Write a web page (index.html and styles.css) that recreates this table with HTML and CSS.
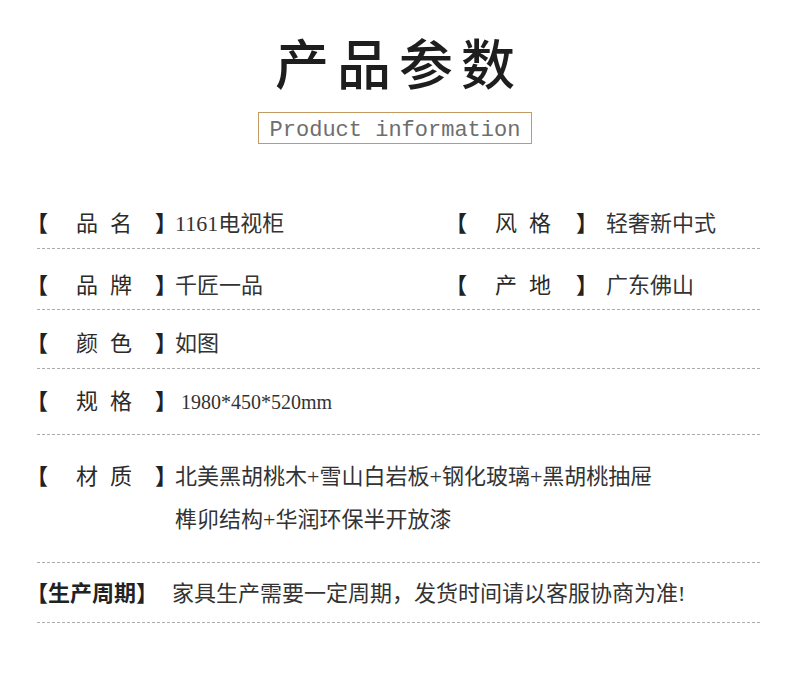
FILE: index.html
```html
<!DOCTYPE html>
<html lang="zh-CN">
<head>
<meta charset="utf-8">
<title>产品参数</title>
<link rel="stylesheet" href="styles.css">
</head>
<body>
<div class="page">
  <header class="head">
    <h1 class="title">产品参数</h1>
    <div class="sub">Product information</div>
  </header>
  <section class="table">
    <div class="row r1">
      <div class="cell">
        <span class="lb">【</span><span class="name">品名</span><span class="rb">】</span><span class="val"><span class="lat">1161</span>电视柜</span>
      </div>
      <div class="cell right">
        <span class="lb">【</span><span class="name">风格</span><span class="rb">】</span><span class="val">轻奢新中式</span>
      </div>
    </div>
    <div class="row r2">
      <div class="cell">
        <span class="lb">【</span><span class="name">品牌</span><span class="rb">】</span><span class="val">千匠一品</span>
      </div>
      <div class="cell right">
        <span class="lb">【</span><span class="name">产地</span><span class="rb">】</span><span class="val">广东佛山</span>
      </div>
    </div>
    <div class="row r3">
      <div class="cell wide">
        <span class="lb">【</span><span class="name">颜色</span><span class="rb">】</span><span class="val">如图</span>
      </div>
    </div>
    <div class="row r4">
      <div class="cell wide">
        <span class="lb">【</span><span class="name">规格</span><span class="rb">】</span><span class="val gap"><span class="lat small">1980*450*520mm</span></span>
      </div>
    </div>
    <div class="row r5">
      <div class="cell wide">
        <span class="lb">【</span><span class="name">材质</span><span class="rb">】</span><span class="val multi">北美黑胡桃木<span class="lat">+</span>雪山白岩板<span class="lat">+</span>钢化玻璃<span class="lat">+</span>黑胡桃抽屉<br>榫卯结构<span class="lat">+</span>华润环保半开放漆</span>
      </div>
    </div>
    <div class="row r6">
      <div class="cell wide">
        <span class="bold">【生产周期】</span><span class="val note">家具生产需要一定周期，发货时间请以客服协商为准<span class="lat">!</span></span>
      </div>
    </div>
  </section>
</div>
</body>
</html>
```

FILE: styles.css
```css
* { box-sizing: border-box; }
html, body { margin: 0; padding: 0; background: #ffffff; }
body {
  font-family: "Noto Sans CJK SC", "Liberation Serif", sans-serif;
  color: #333;
}
.page { width: 790px; }
.head {
  display: flex;
  flex-direction: column;
  align-items: center;
  padding-top: 31px;
}
.title {
  margin: 0;
  font-size: 54px;
  line-height: 62px;
  font-weight: 500;
  letter-spacing: 8px;
  padding-left: 8px;
  color: #1e1e1e;
}
.sub {
  margin-top: 19px;
  width: 274px;
  height: 32px;
  border: 1px solid #c39b62;
  font-family: "Liberation Mono", monospace;
  font-size: 22px;
  line-height: 30px;
  padding-top: 3px;
  color: #6e6e6e;
  text-align: center;
}
.table {
  margin: 54px 30px 0 37px;
}
.row {
  display: flex;
  background-image: repeating-linear-gradient(to right, #ababab 0 3px, transparent 3px 5px);
  background-size: 100% 1px;
  background-repeat: no-repeat;
  background-position: left bottom;
  font-size: 22px;
  line-height: 24px;
}
.r1 { padding: 11px 0 16px; }
.r2 { padding: 22px 0 15px; }
.r3 { padding: 19px 0 16px; }
.r4 { padding: 18px 0 24px; }
.r5 { padding: 18px 0 24px; line-height: 43px; }
.r6 { padding: 16px 0 20px; }
.cell {
  display: flex;
  align-items: flex-start;
  width: 412px;
  flex: none;
}
.cell.wide { flex: 1; width: auto; }
.cell.right { width: auto; flex: 1; }
.lb, .rb {
  font-weight: 700;
  color: #222;
  flex: none;
}
.lb { width: 22px; margin-left: -11px; }
.rb { width: 20px; margin-left: 1px; }
.name {
  margin-left: 28px;
  letter-spacing: 12px;
  width: 78px;
  flex: none;
  color: #2a2a2a;
}
.val { color: #333; }
.right .lb { margin-left: -4px; }
.right .name { margin-left: 28px; }
.right .rb { margin-left: 3px; width: 22px; }
.right .val { margin-left: 8px; }
.val.gap { margin-left: 6px; }
.lat {
  font-family: "Liberation Serif", serif;
  font-size: 22px;
  line-height: 0;
}
.lat.small { font-size: 20px; }
.bold {
  margin-left: -11px;
  font-weight: 700;
  color: #222;
  flex: none;
}
.note { margin-left: 14px; }
```
